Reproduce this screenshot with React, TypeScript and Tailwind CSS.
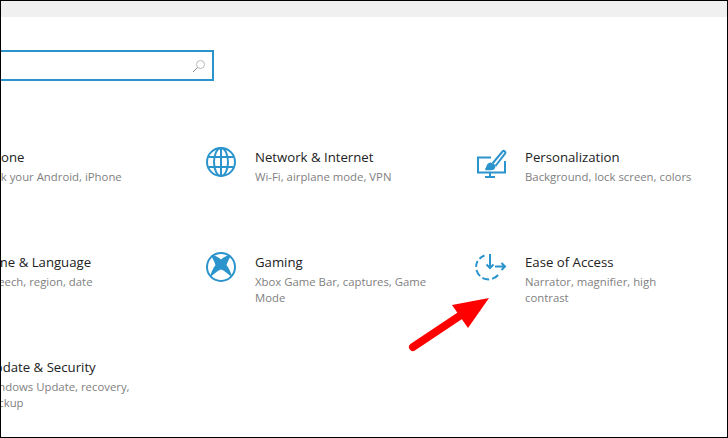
import React from "react";

const blue = "#2b94cc";

function Globe() {
  return (
    <svg width="32" height="32" viewBox="0 0 32 32" fill="none" stroke={blue} strokeWidth="2">
      <circle cx="16" cy="16" r="14" />
      <ellipse cx="16" cy="16" rx="7" ry="14" />
      <path d="M3.500 11h25M3.500 21h25M16 2v28" />
    </svg>
  );
}

function Xbox() {
  return (
    <svg width="32" height="32" viewBox="0 0 32 32" fill="none">
      <circle cx="16" cy="16" r="14" stroke={blue} strokeWidth="2" />
      <path
        fill={blue}
        d="M6 4.500C10 4 13.500 6 16 8.500 18.500 6 22 4 26 4.500 24 8 22.500 11 21.500 14 24 17.500 26.500 22 27 26.500 23 22.500 19 19.500 16 18.500 13 19.500 9 22.500 5 26.500 5.500 22 8 17.500 10.500 14 9.500 11 8 8 6 4.500Z"
      />
    </svg>
  );
}

function Brush() {
  return (
    <svg width="32" height="32" viewBox="0 0 32 32" fill="none" stroke={blue} strokeWidth="2">
      <path d="M16 11.500H3v15h27V15" />
      <path d="M10 31h10M15 27v4" />
      <path d="M17.500 17.500L27.500 5.500c1.500-1.500 3.800.5 2.500 2.200L20.500 20" />
      <path d="M15.500 17.500c-2.500.5-3 2-3.300 3.500-.2 1.200-.7 1.800-1.700 2.200h5c2.500 0 4-1.500 4-3.500z" fill={blue} />
    </svg>
  );
}

function Ease() {
  return (
    <svg width="32" height="32" viewBox="0 0 32 32" fill="none" stroke={blue} strokeWidth="2">
      <path d="M9.500 4.500A12.500 12.500 0 0 0 1 16" strokeDasharray="6 3" />
      <path d="M1.500 19A12.500 12.500 0 0 0 24.500 22" strokeDasharray="7 3" />
      <path d="M15 3v14M11.500 13.500l3.500 3.500 3.500-3.500" />
      <path d="M20 15.500h10M26.500 12l3.500 3.500-3.500 3.500" />
    </svg>
  );
}

function Item({ icon, title, lines }: { icon?: React.ReactNode; title: string; lines: string[] }) {
  return (
    <div className="flex h-[105px] w-[270px] shrink-0 items-start">
      <div className="mt-[-1px] flex w-[50px] shrink-0">{icon}</div>
      <div className="w-[180px] shrink-0">
        <div className="text-[13.200px] leading-[20px] text-[#222222]">{title}</div>
        <div className="mt-[2px] text-[11.350px] leading-[16px] text-[#7f7f7f]">
          {lines.map((l) => (
            <div key={l}>{l}</div>
          ))}
        </div>
      </div>
    </div>
  );
}

export default function App() {
  return (
    <div
      className="relative flex h-[438px] w-[728px] flex-col overflow-hidden border border-black bg-white"
      style={{ fontFamily: '"Open Sans", "Noto Sans", sans-serif' }}
    >
      <div className="h-[16px] shrink-0 bg-[#f0f0f0]" />
      <div className="ml-[-40px] mt-[33px] flex h-[31px] w-[253px] shrink-0 items-center justify-end border-2 border-[#2b94cc] pr-[6px]">
        <svg width="14" height="14" viewBox="0 0 14 14" fill="none" stroke="#8a8a8a" strokeWidth="1">
          <circle cx="8.500" cy="5.500" r="4" stroke="#bbbbbb" />
          <path d="M5.500 8.500L1 13" />
        </svg>
      </div>
      <div className="ml-[-66px] mt-[66px] flex flex-col">
        <div className="flex">
          <Item title="Phone" lines={["Link your Android, iPhone"]} />
          <Item icon={<Globe />} title="Network & Internet" lines={["Wi-Fi, airplane mode, VPN"]} />
          <Item icon={<Brush />} title="Personalization" lines={["Background, lock screen, colors"]} />
        </div>
        <div className="flex">
          <Item title="Time & Language" lines={["Speech, region, date"]} />
          <Item icon={<Xbox />} title="Gaming" lines={["Xbox Game Bar, captures, Game", "Mode"]} />
          <Item icon={<Ease />} title="Ease of Access" lines={["Narrator, magnifier, high", "contrast"]} />
        </div>
        <div className="flex">
          <Item title="Update & Security" lines={["Windows Update, recovery,", "backup"]} />
        </div>
      </div>
      <svg className="absolute left-[407px] top-[295px]" width="84" height="57" viewBox="0 0 84 57" fill="none">
        <path d="M5 51L56 17" stroke="#ff0000" strokeWidth="8" strokeLinecap="round" />
        <path d="M81 2L44 9 60 32Z" fill="#ff0000" />
      </svg>
    </div>
  );
}
